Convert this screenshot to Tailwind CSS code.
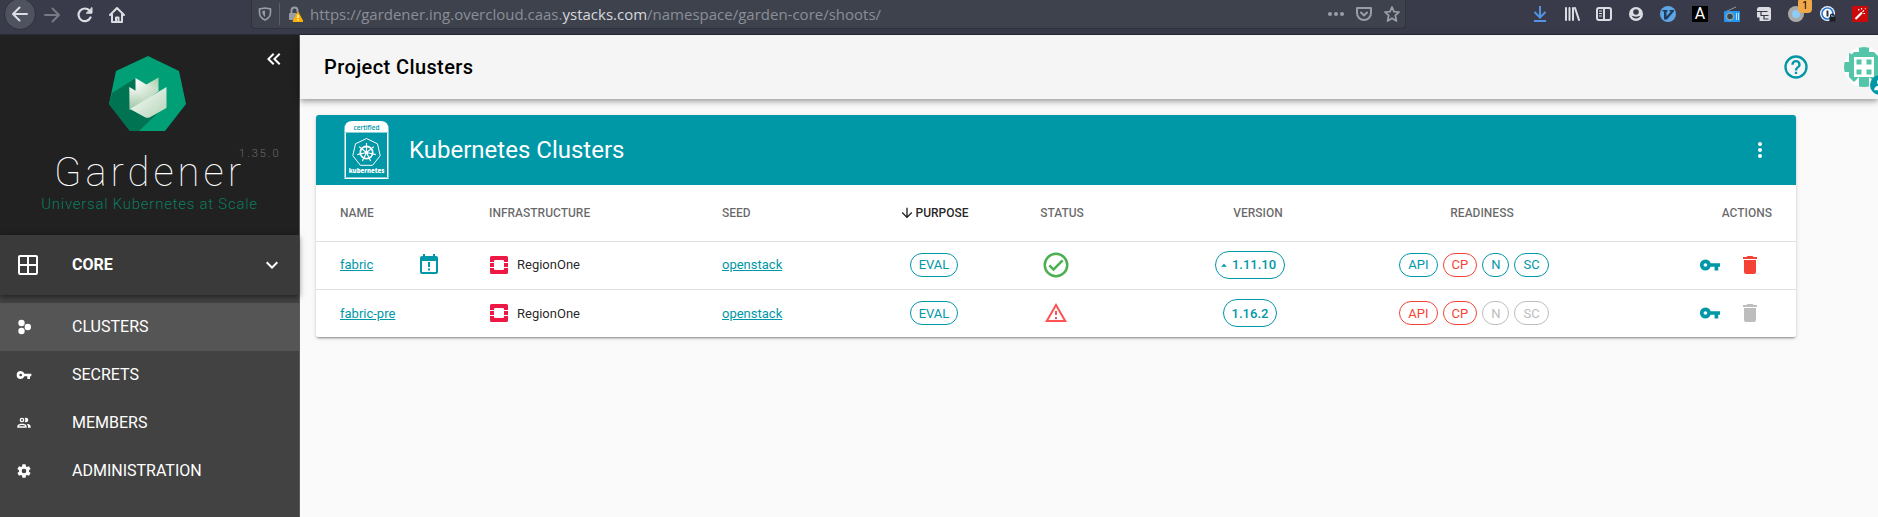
<!DOCTYPE html>
<html lang="en">
<head>
<meta charset="utf-8">
<title>Project Clusters - Gardener</title>
<script src="https://cdn.jsdelivr.net/npm/@tailwindcss/browser@4"></script>
</head>
<body class="flex min-h-screen flex-col overflow-x-hidden bg-[#fafafa] font-[Roboto,sans-serif] text-[13px] text-black/87">

<svg class="hidden" aria-hidden="true">
  <symbol id="key" viewBox="0 0 24 24"><path fill="currentColor" d="M12.65 10A6 6 0 0 0 7 6a6 6 0 0 0 0 12 6 6 0 0 0 5.65-4H17v4h4v-4h2v-4zM7 14a2 2 0 1 1 0-4 2 2 0 0 1 0 4z"/></symbol>
  <symbol id="trash" viewBox="0 0 24 24"><path fill="currentColor" d="M19 4h-3.500l-1-1h-5l-1 1H5v2h14M6 19a2 2 0 0 0 2 2h8a2 2 0 0 0 2-2V7H6z"/></symbol>
  <symbol id="openstack" viewBox="0 0 20 20"><path fill="#ed1944" d="M2.500 1h15A1.500 1.500 0 0 1 19 2.500V7h-4V6a1 1 0 0 0-1-1H6a1 1 0 0 0-1 1v1H1V2.500A1.500 1.500 0 0 1 2.500 1zM1 8h4v4H1zM15 8h4v4h-4zM1 13h4v1a1 1 0 0 0 1 1h8a1 1 0 0 0 1-1v-1h4v4.500a1.500 1.500 0 0 1-1.500 1.500h-15A1.500 1.500 0 0 1 1 17.500z"/></symbol>
</svg>

<!-- Browser toolbar -->
<header class="flex h-[35px] shrink-0 items-start border-b border-[#2a2a38] bg-[#393b4a] text-[#dcdde2]">
  <nav class="flex w-[251px] shrink-0 items-center pl-1" aria-label="Browser">
    <button aria-label="Back" class="-mt-0.5 flex size-8 items-center justify-center rounded-full border border-[#2f303b] bg-[#4f525f]"><svg class="size-4" viewBox="0 0 16 16" fill="none" stroke="currentColor" stroke-width="2" stroke-linecap="round" stroke-linejoin="round"><path d="M15 8H1.500M7.500 1.500L1 8l6.500 6.500"/></svg></button>
    <button aria-label="Forward" class="flex h-7 w-8 items-center justify-center text-[#777985]"><svg class="size-4" viewBox="0 0 16 16" fill="none" stroke="currentColor" stroke-width="2" stroke-linecap="round" stroke-linejoin="round"><path d="M1 8h13.500M8.500 1.500L15 8l-6.500 6.500"/></svg></button>
    <button aria-label="Reload" class="ml-px flex h-7 w-8 items-center justify-center"><svg class="size-4" viewBox="0 0 16 16" fill="none" stroke="currentColor" stroke-width="2.200" stroke-linecap="round"><path d="M13.500 10.500A6.300 6.300 0 1 1 12.500 3.600"/><path d="M15 .8v5.400H9.600z" fill="currentColor" stroke-width="1" stroke-linejoin="round"/></svg></button>
    <button aria-label="Home" class="flex h-7 w-8 items-center justify-center"><svg class="size-4" viewBox="0 0 16 16" fill="none" stroke="currentColor" stroke-width="2" stroke-linecap="round" stroke-linejoin="round"><path d="M1 8l7-7 7 7M3 7.500V15h10V7.500"/><path d="M7 15v-4.500h2.500V15"/></svg></button>
  </nav>
  <div class="flex h-[29px] min-w-0 flex-1 items-center rounded-b-sm border border-t-0 border-[#30323e] bg-[#3d424d] pr-[5px] pl-1.5 text-[#9a9da6]">
    <svg class="size-3.5 shrink-0" viewBox="0 0 14 14" fill="none" stroke="currentColor" stroke-width="1.600"><path d="M7 1l5.500 1v3.500c0 3.500-2 6-5.500 7.500C3.500 11.500 1.500 9 1.500 5.500V2z"/><path d="M7 3.500v6.500C5 8.500 4.500 7 4.300 4z" fill="currentColor" stroke="none"/></svg>
    <span class="mx-[7px] h-[22px] w-px bg-[#5b5e69]"></span>
    <svg class="size-4 shrink-0" viewBox="0 0 16 16"><path d="M4.500 8V4.500a3 3 0 0 1 6 0V6" fill="none" stroke="currentColor" stroke-width="2"/><rect x="2" y="7" width="8" height="7" rx="1" fill="currentColor"/><path d="M11 6l5 9.500H6z" fill="#ffb000" stroke="#ffb000" stroke-linejoin="round"/><path d="M11 9v3M11 13.200v1.300" stroke="#fff" stroke-width="1.400"/></svg>
    <div role="textbox" aria-label="Address" class="ml-[7px] min-w-0 flex-1 truncate font-['Open_Sans',sans-serif] text-[15px]/6 text-[#8b8e98]">https://gardener.ing.overcloud.caas.<span class="text-[#d8d9df]">ystacks.com</span>/namespace/garden-core/shoots/</div>
    <div class="flex items-center gap-3">
      <button aria-label="Page actions"><svg class="size-4" viewBox="0 0 16 16" fill="currentColor"><circle cx="2" cy="8" r="2"/><circle cx="8" cy="8" r="2"/><circle cx="14" cy="8" r="2"/></svg></button>
      <button aria-label="Pocket"><svg class="size-4" viewBox="0 0 16 16" fill="none" stroke="currentColor" stroke-width="2" stroke-linecap="round" stroke-linejoin="round"><path d="M1 2h14v5a7 7 0 0 1-14 0z"/><path d="M5 6.500l3 3 3-3"/></svg></button>
      <button aria-label="Bookmark"><svg class="size-4" viewBox="0 0 16 16" fill="none" stroke="currentColor" stroke-width="1.800" stroke-linejoin="round"><path d="M8 1l2 4.600 5 .5-3.700 3.300L12.400 15 8 12.200 3.600 15l1.100-5.600L1 6.100l5-.5z"/></svg></button>
    </div>
  </div>
  <div class="flex h-7 shrink-0 items-center gap-4 pr-2.5 pl-[126px]">
    <button aria-label="Downloads" class="text-[#5294e2]"><svg class="size-4" viewBox="0 0 16 16" fill="none" stroke="currentColor" stroke-width="2"><path d="M8 0v11M2.500 6L8 11.500 13.500 6M2 15h12"/></svg></button>
    <button aria-label="Library"><svg class="size-4" viewBox="0 0 16 16" fill="none" stroke="currentColor" stroke-width="2" stroke-linecap="round"><path d="M2 2v12M5.500 2v12M9 2v12M11 2l4 12"/></svg></button>
    <button aria-label="Sidebars"><svg class="size-4" viewBox="0 0 16 16" fill="none" stroke="currentColor" stroke-width="2"><rect x="1" y="2" width="14" height="12" rx="2"/><path d="M8 2v12"/><path d="M3 5h3M3 7.500h3M3 10h3" stroke-width="1.200"/></svg></button>
    <button aria-label="Account"><svg class="size-4" viewBox="0 0 16 16"><circle cx="8" cy="8" r="7" fill="currentColor"/><circle cx="8" cy="6" r="2.800" fill="#393b4a"/><path d="M3.500 9.500c1.500 4 7.500 4 9 0-2 1.500-7 1.500-9 0z" fill="#393b4a"/></svg></button>
    <button aria-label="Vimium"><svg class="size-4" viewBox="0 0 16 16"><circle cx="8" cy="8" r="8" fill="#5ea5e6"/><path d="M2.500 4h5v1.500H6.500v5L11 5.500H9.500V4H14v1.200L7 13.500H4V5.500H2.500z" fill="#1f3c5c"/></svg></button>
    <button aria-label="Font contrast" class="flex size-4 items-center justify-center bg-black text-base/4 text-white">A</button>
    <button aria-label="Radio"><svg class="size-4" viewBox="0 0 16 16"><path d="M2 5.500L12 1" stroke="#8a9aa5"/><rect y="5" width="16" height="11" rx="1" fill="#2196f3"/><circle cx="6" cy="10.500" r="4.200" fill="#90a4ae"/><circle cx="6" cy="10.500" r="2.800" fill="#37474f"/><path d="M12.500 7v7M14.500 7v7" stroke="#bbdefb"/></svg></button>
    <button aria-label="Tab tree"><svg class="size-4" viewBox="0 0 16 16"><rect x="1" y="1" width="14" height="14" rx="2.500" fill="currentColor"/><path d="M1 5.500h10.500M5 6v3.500h7.500M8 10v3h4.500" fill="none" stroke="#393b4a" stroke-width="1.200"/><path d="M0 11.500h3.500V16H0z" fill="#393b4a"/></svg></button>
    <button aria-label="Containers, 1 notification" class="relative"><svg class="size-4" viewBox="0 0 16 16"><circle cx="8" cy="8" r="8" fill="#a9a9aa"/><circle cx="8" cy="8" r="4" fill="#8ecbf5"/></svg><span class="absolute -top-2 left-2.5 flex h-[15px] w-3.5 items-center justify-center rounded-sm bg-[#f0a848] text-[10px] text-black">1</span></button>
    <button aria-label="Password manager"><svg class="size-4" viewBox="0 0 16 16"><circle cx="7.500" cy="7.500" r="7.500" fill="#f4f6f8"/><circle cx="7.500" cy="7.500" r="5.500" fill="#fff" stroke="#2878d0" stroke-width="1.600"/><path d="M7.500 4.500v6" stroke="#24324a" stroke-width="2"/><path d="M10.500 11.500V10a1.800 1.800 0 0 1 3.600 0v1.500" fill="none" stroke="#1d1d22" stroke-width="1.300"/><rect x="9.500" y="11" width="6" height="4.500" fill="#1d1d22"/></svg></button>
    <button aria-label="Magic wand"><svg class="size-4" viewBox="0 0 16 16"><rect width="16" height="16" rx="1" fill="#cc0a0a"/><path d="M3.500 13L10 6.500" stroke="#fff" stroke-width="2.200"/><path d="M10.500 5.800l1.500-1.500M6.500 3l.5 1.500M9.500 2v1.500M13 7.500h-1.500M13.500 2.500l-.5.500" stroke="#fff" stroke-width="1.200"/></svg></button>
  </div>
</header>

<div class="flex flex-1">
  <!-- Sidebar -->
  <aside class="flex w-[300px] shrink-0 flex-col border-r border-[#5c5c5c] bg-[#424242] text-white">
    <div class="relative flex h-[200px] flex-col items-center bg-[#212121] pt-5">
      <button aria-label="Collapse sidebar" class="absolute top-3 right-[13px]"><svg class="size-6" viewBox="0 0 24 24" fill="currentColor"><path d="M18.410 7.410L17 6l-6 6 6 6 1.410-1.410L13.830 12zM12.410 7.410L11 6l-6 6 6 6 1.410-1.410L7.830 12z"/></svg></button>
      <svg class="mr-1 h-[78px] w-20" viewBox="0 0 80 78" role="img" aria-label="Gardener logo">
        <defs><linearGradient id="g1" x1="0" y1="0" x2="1" y2="1"><stop offset="0" stop-color="#fff"/><stop offset="1" stop-color="#b3d3b6"/></linearGradient><linearGradient id="g2" x1="0" y1="0" x2="0" y2="1"><stop offset="0" stop-color="#f4f9f4"/><stop offset="1" stop-color="#9cc3a0"/></linearGradient><linearGradient id="g3" x1="1" y1="0" x2="0" y2="1"><stop offset="0" stop-color="#a9cdab"/><stop offset="1" stop-color="#e8f2e8"/></linearGradient></defs>
        <path fill="#009f76" d="M40 1l31 15 7 33-21 27H22L1 49l7-33z"/>
        <path fill="#007352" d="M28 23L4 38 1 49l21 27h9l27-26z"/>
        <path fill="url(#g3)" d="M50.500 22.500V37L37.500 30z"/>
        <path fill="url(#g1)" d="M27.500 23l22.500 13.500-9 7L27.500 37z"/>
        <path fill="url(#g2)" d="M21.300 32L41 43.500 21.500 55z"/>
        <path fill="url(#g1)" d="M58.500 32v20q0 1-1 1.500L42 62.200q-2.500 1-5 0L22 54z"/>
      </svg>
      <div class="relative mt-[17px]">
        <h1 class="text-[40px]/[46px] font-thin tracking-[4px]">Gardener</h1>
        <span class="absolute -top-1 left-full -ml-1.5 text-[11px]/4 font-light tracking-[2px] text-[#6b6b6b]">1.35.0</span>
      </div>
      <p class="-mt-0.5 text-[15px]/5 font-light tracking-wider text-[#009f76]/75">Universal Kubernetes at Scale</p>
    </div>
    <button class="z-10 flex h-[60px] items-center bg-[#3a3a3a] pl-[18px] text-base font-bold shadow-[0_2px_6px_rgba(0,0,0,0.5)]">
      <svg class="size-5" viewBox="0 0 20 20" fill="none" stroke="currentColor" stroke-width="2"><rect x="1" y="1" width="18" height="18" rx="1"/><path d="M10 1v18M1 10h18"/></svg>
      <span class="ml-[34px]">CORE</span>
      <svg class="mr-[15px] ml-auto size-6" viewBox="0 0 24 24" fill="currentColor"><path d="M7.410 8.580L12 13.170l4.590-4.590L18 10l-6 6-6-6z"/></svg>
    </button>
    <nav class="flex flex-col pt-2 text-base" aria-label="Project">
      <a href="#" aria-current="page" class="flex h-12 items-center gap-10 bg-[#555] pl-4"><svg class="size-4" viewBox="0 0 16 16" fill="currentColor"><circle cx="5.500" cy="4" r="3.200"/><circle cx="5.500" cy="12" r="3.200"/><circle cx="11.800" cy="8" r="3.200"/></svg>CLUSTERS</a>
      <a href="#" class="flex h-12 items-center gap-10 pl-4"><svg class="size-4"><use href="#key"/></svg>SECRETS</a>
      <a href="#" class="flex h-12 items-center gap-10 pl-4"><svg class="size-4" viewBox="0 0 24 24" fill="currentColor"><path d="M13.070 10.410a5 5 0 0 0 0-5.820A3.390 3.390 0 0 1 15 4a3.500 3.500 0 0 1 0 7 3.390 3.390 0 0 1-1.930-.59M5.500 7.500A3.500 3.500 0 1 1 9 11a3.500 3.500 0 0 1-3.500-3.500m2 0A1.500 1.500 0 1 0 9 6a1.500 1.500 0 0 0-1.500 1.500M16 17v2H2v-2s0-4 7-4 7 4 7 4m-2 0c-.14-.78-1.330-2-5-2s-4.930 1.310-5 2m11.950-4A5.320 5.320 0 0 1 18 17v2h4v-2s0-3.630-6.060-4z"/></svg>MEMBERS</a>
      <a href="#" class="flex h-12 items-center gap-10 pl-4"><svg class="size-4" viewBox="0 0 24 24" fill="currentColor"><path d="M12 15.500A3.500 3.500 0 0 1 8.500 12 3.500 3.500 0 0 1 12 8.500a3.500 3.500 0 0 1 3.500 3.500 3.500 3.500 0 0 1-3.500 3.500m7.430-2.530c.04-.32.07-.64.07-.97s-.03-.66-.07-1l2.110-1.630c.19-.15.240-.42.120-.64l-2-3.460c-.12-.22-.39-.31-.61-.22l-2.490 1c-.52-.39-1.060-.73-1.690-.98l-.37-2.650A.506.506 0 0 0 14 2h-4c-.25 0-.46.180-.5.420l-.37 2.650c-.63.250-1.170.590-1.690.98l-2.490-1c-.22-.09-.49 0-.61.220l-2 3.460c-.13.220-.07.490.120.640L4.570 11c-.04.340-.07.670-.07 1s.030.650.070.970l-2.110 1.660c-.19.150-.25.420-.12.640l2 3.460c.120.220.390.300.610.220l2.490-1.010c.520.400 1.060.740 1.690.990l.37 2.650c.040.240.250.420.5.420h4c.25 0 .46-.18.5-.42l.37-2.650c.63-.26 1.170-.59 1.690-.99l2.490 1.010c.22.080.49 0 .61-.22l2-3.460c.12-.22.070-.49-.12-.64z"/></svg>ADMINISTRATION</a>
    </nav>
  </aside>

  <main class="min-w-0 flex-1">
    <div class="relative flex h-16 items-center overflow-x-clip bg-[#f5f5f5] pl-6 shadow-[0_2px_4px_-1px_rgba(0,0,0,0.2),0_4px_5px_rgba(0,0,0,0.14),0_1px_10px_rgba(0,0,0,0.12)]">
      <h2 class="text-xl font-medium tracking-[0.02em] text-black">Project Clusters</h2>
      <button aria-label="Help" class="ml-auto text-[#0097a7]"><svg class="size-7" viewBox="0 0 24 24" fill="currentColor"><path d="M11 18h2v-2h-2zm1-16a10 10 0 1 0 0 20 10 10 0 0 0 0-20m0 18a8 8 0 1 1 0-16 8 8 0 0 1 0 16m0-14a4 4 0 0 0-4 4h2a2 2 0 1 1 4 0c0 2-3 1.750-3 5h2c0-2.250 3-2.500 3-5a4 4 0 0 0-4-4"/></svg></button>
      <button aria-label="User menu" class="relative -mr-1.5 ml-[34px] size-10 shrink-0">
        <svg class="size-10" viewBox="0 0 40 40"><defs><clipPath id="av"><circle cx="20" cy="20" r="20"/></clipPath></defs><g clip-path="url(#av)"><path fill="#fff" d="M0 0h40v40H0z"/><path fill="#54c5a8" d="M15 0h10v5h5l-5 5H15l-5-5h5zM15 40h10v-5h5l-5-5H15l-5 5h5zM0 15h5v-5l5-5v30l-5-5v-5H0zM40 15h-5v-5l-5-5v30l5-5v-5h5zM5 5l5 5H5zM10 5h5v5h-5zM25 5h5v5h-5zM10 30h5v5h-5zM25 30h5v5h-5z"/><path fill="#fff" d="M10 10h20v20H10z"/><path fill="#54c5a8" d="M12.500 12.500h5v5h-5zM22.500 12.500h5v5h-5zM12.500 22.500h5v5h-5zM22.500 22.500h5v5h-5z"/></g></svg>
        <span class="absolute -right-1.5 -bottom-2 flex size-5 items-center justify-center rounded-full bg-[#0097a7] text-white"><svg class="size-3.5" viewBox="0 0 24 24" fill="currentColor"><circle cx="12" cy="7" r="5"/><path d="M2 21c0-5 4-8 10-8s10 3 10 8z"/></svg></span>
      </button>
    </div>

    <section class="mt-4 mr-[82px] ml-4 overflow-hidden rounded-[3px] bg-white shadow-[0_3px_1px_-2px_rgba(0,0,0,0.2),0_2px_2px_rgba(0,0,0,0.14),0_1px_5px_rgba(0,0,0,0.12)]">
      <div class="flex h-[70px] items-center bg-[#0097a7] pr-6 pl-7 text-white">
        <svg class="h-[58px] w-[45px]" viewBox="0 0 44 58" role="img" aria-label="Certified Kubernetes">
          <path fill="#fff" d="M0 58V8q0-8 8-8h28q8 0 8 8v50z"/><path fill="#0097a7" d="M1.500 12h41v44.500h-41z"/>
          <path d="M0 11.500h44M0 56.500h44" stroke="#8ccfd6"/>
          <text x="22" y="8.500" text-anchor="middle" font-family="Open Sans, sans-serif" font-weight="600" font-size="6.500" fill="#0097a7">certified</text>
          <text x="22" y="52" text-anchor="middle" font-family="Open Sans, sans-serif" font-weight="800" font-size="6" fill="#fff">kubernetes</text>
          <path fill="none" stroke="#fff" d="M22 17.500l11 5.300 2.700 11.900-7.600 9.600H15.900l-7.600-9.600L11 22.800z"/>
          <g fill="none" stroke="#fff" stroke-width="1.200"><circle cx="22" cy="31.500" r="6.200" stroke-width="1.700"/><path d="M22 31.500V22M22 31.500l7.400-5.900M22 31.500l9.300 2.100M22 31.500l4.100 8.600M22 31.500l-4.100 8.600M22 31.500l-9.300 2.100M22 31.500l-7.400-5.900"/></g><circle cx="22" cy="31.500" r="1.600" fill="#fff"/>
        </svg>
        <h3 class="ml-5 text-2xl">Kubernetes Clusters</h3>
        <button aria-label="Table options" class="ml-auto"><svg class="size-6" viewBox="0 0 24 24" fill="currentColor"><circle cx="12" cy="6" r="2"/><circle cx="12" cy="12" r="2"/><circle cx="12" cy="18" r="2"/></svg></button>
      </div>
      <table class="w-full table-fixed">
        <colgroup><col class="w-[157px]"><col class="w-[233px]"><col class="w-[177px]"><col class="w-[102px]"><col class="w-[142px]"><col class="w-[246px]"><col class="w-[202px]"><col class="w-[221px]"></colgroup>
        <thead>
          <tr class="h-14 border-b border-black/12 text-xs whitespace-nowrap text-black/60 *:font-medium">
            <th scope="col" class="pl-6 text-left">NAME</th>
            <th scope="col" class="pl-4 text-left">INFRASTRUCTURE</th>
            <th scope="col" class="pl-4 text-left">SEED</th>
            <th scope="col" aria-sort="descending" class="text-black/87"><span class="flex items-center justify-center"><svg class="size-4" viewBox="0 0 24 24" fill="currentColor"><path d="M11 4h2v12l5.500-5.500 1.420 1.420L12 19.840l-7.920-7.920L5.500 10.500 11 16z"/></svg>PURPOSE</span></th>
            <th scope="col" class="pl-3">STATUS</th>
            <th scope="col" class="pl-4">VERSION</th>
            <th scope="col" class="pl-4">READINESS</th>
            <th scope="col" class="pr-6 text-right">ACTIONS</th>
          </tr>
        </thead>
        <tbody class="text-[#0097a7]">
          <tr class="h-12 border-b border-black/12">
            <td class="pr-8 pl-6"><div class="flex items-center justify-between"><a href="#" class="underline">fabric</a><svg class="size-6" viewBox="0 0 24 24" fill="currentColor"><path d="M19 19H5V8h14m0-5h-1V1h-2v2H8V1H6v2H5a2 2 0 0 0-2 2v14a2 2 0 0 0 2 2h14a2 2 0 0 0 2-2V5a2 2 0 0 0-2-2M11 9h2v5h-2zm0 6.500h2v2h-2z"/></svg></div></td>
            <td class="pl-4 text-black/87"><div class="flex items-center gap-2"><svg class="size-5"><use href="#openstack"/></svg>RegionOne</div></td>
            <td class="pl-4"><a href="#" class="underline">openstack</a></td>
            <td><div class="flex justify-center"><span class="flex h-6 items-center rounded-full border border-current px-2">EVAL</span></div></td>
            <td class="text-[#4caf50]"><svg class="mx-auto size-[30px]" viewBox="0 0 24 24" fill="currentColor" role="img" aria-label="Healthy"><path d="M12 2a10 10 0 1 0 0 20 10 10 0 0 0 0-20m0 18a8 8 0 1 1 0-16 8 8 0 0 1 0 16m4.590-12.420L10 14.170l-2.590-2.580L6 13l4 4 8-8z"/></svg></td>
            <td><div class="flex justify-center"><button class="flex h-7 items-center gap-px rounded-full border border-current pr-2 pl-px font-medium"><svg class="size-3.5" viewBox="0 0 24 24" fill="currentColor"><path d="M7 15l5-5 5 5z"/></svg>1.11.10</button></div></td>
            <td><div class="flex justify-center gap-[5px] *:flex *:h-6 *:items-center *:rounded-full *:border *:border-current *:px-2"><span>API</span><span class="text-[#f44336]">CP</span><span>N</span><span>SC</span></div></td>
            <td class="pr-[26px]"><div class="flex justify-end *:flex *:h-10 *:w-10 *:items-center *:justify-center"><button aria-label="Show access for fabric"><svg class="size-[22px]"><use href="#key"/></svg></button><button aria-label="Delete fabric" class="text-[#f44336]"><svg class="size-6"><use href="#trash"/></svg></button></div></td>
          </tr>
          <tr class="h-12">
            <td class="pl-6"><a href="#" class="underline">fabric-pre</a></td>
            <td class="pl-4 text-black/87"><div class="flex items-center gap-2"><svg class="size-5"><use href="#openstack"/></svg>RegionOne</div></td>
            <td class="pl-4"><a href="#" class="underline">openstack</a></td>
            <td><div class="flex justify-center"><span class="flex h-6 items-center rounded-full border border-current px-2">EVAL</span></div></td>
            <td class="text-[#ff5252]"><svg class="mx-auto size-6" viewBox="0 0 24 24" fill="currentColor" role="img" aria-label="Error"><path d="M12 2L1 21h22M12 6l7.530 13H4.470M11 10v4h2v-4m-2 6v2h2v-2"/></svg></td>
            <td><div class="flex justify-center"><button class="flex h-7 items-center rounded-full border border-current px-2 font-medium">1.16.2</button></div></td>
            <td><div class="flex justify-center gap-[5px] *:flex *:h-6 *:items-center *:rounded-full *:border *:border-current *:px-2"><span class="text-[#f44336]">API</span><span class="text-[#f44336]">CP</span><span class="text-[#bdbdbd]">N</span><span class="text-[#bdbdbd]">SC</span></div></td>
            <td class="pr-[26px]"><div class="flex justify-end *:flex *:h-10 *:w-10 *:items-center *:justify-center"><button aria-label="Show access for fabric-pre"><svg class="size-[22px]"><use href="#key"/></svg></button><button aria-label="Delete fabric-pre" disabled class="text-[#bdbdbd]"><svg class="size-6"><use href="#trash"/></svg></button></div></td>
          </tr>
        </tbody>
      </table>
    </section>
  </main>
</div>
</body>
</html>
